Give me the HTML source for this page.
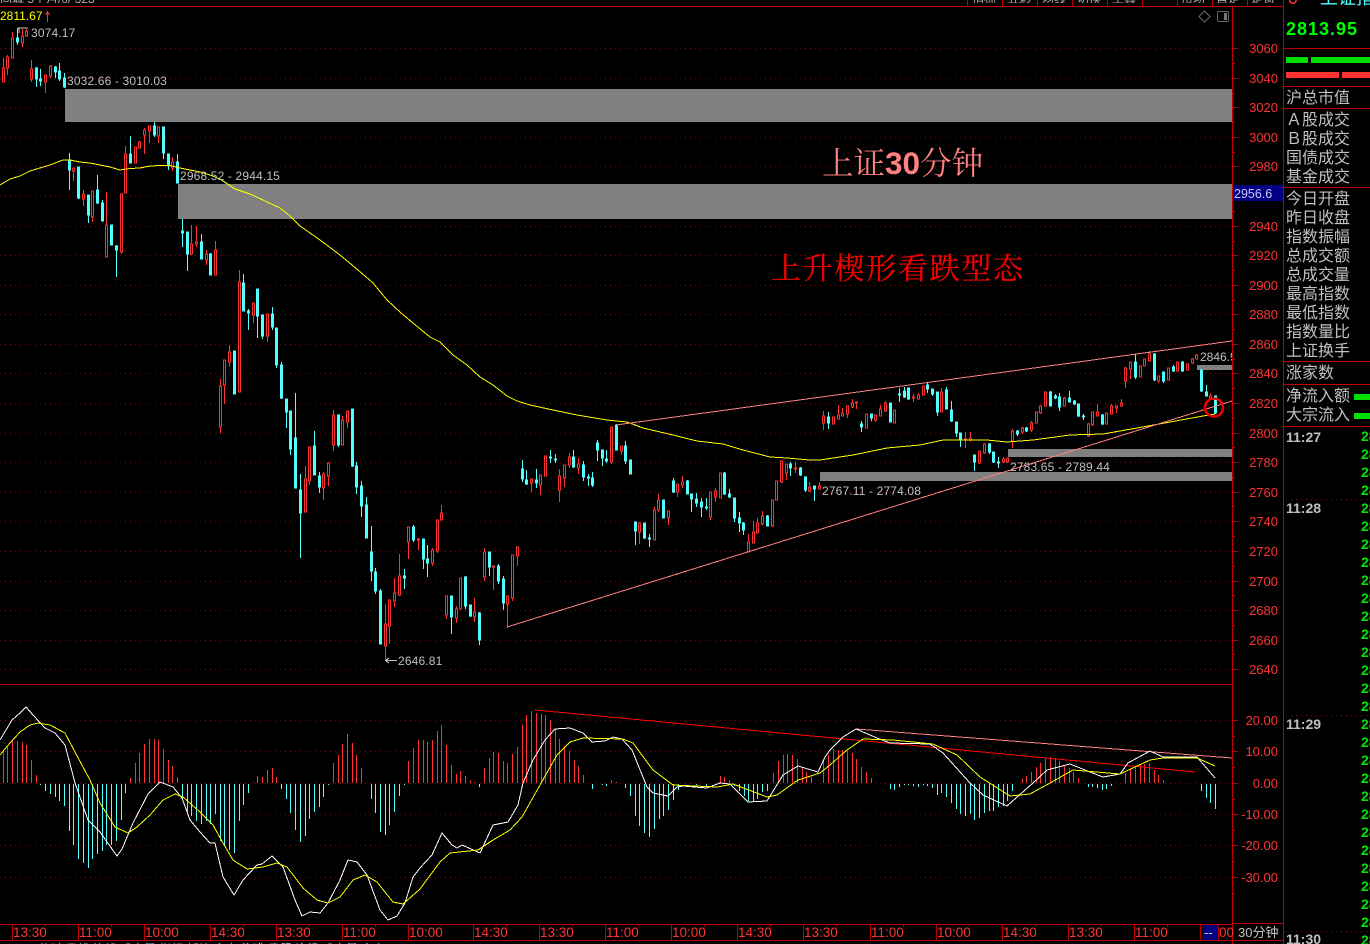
<!DOCTYPE html>
<html><head><meta charset="utf-8"><style>
html,body{margin:0;padding:0;background:#000;width:1370px;height:944px;overflow:hidden}
svg{display:block;font-family:"Liberation Sans",sans-serif}
.c{shape-rendering:crispEdges;fill:none}
.cj{font-family:"Liberation Sans","WenQuanYi Zen Hei","Noto Sans CJK SC",sans-serif}
</style></head><body>
<svg width="1370" height="944" viewBox="0 0 1370 944" xmlns="http://www.w3.org/2000/svg">
<rect width="1370" height="944" fill="#000"/>
<!-- grid -->
<path class="c" stroke="#900000" stroke-dasharray="1 4" d="M0 48.5H1232M0 78.5H1232M0 107.5H1232M0 137.5H1232M0 166.5H1232M0 196.5H1232M0 226.5H1232M0 255.5H1232M0 285.5H1232M0 314.5H1232M0 344.5H1232M0 373.5H1232M0 403.5H1232M0 433.5H1232M0 462.5H1232M0 492.5H1232M0 521.5H1232M0 551.5H1232M0 581.5H1232M0 610.5H1232M0 640.5H1232M0 669.5H1232M0 720.5H1232M0 751.5H1232M0 783.5H1232M0 814.5H1232M0 845.5H1232M0 877.5H1232"/>
<!-- zones -->
<g fill="#808080"><rect x="65" y="89" width="1167" height="33"/><rect x="178" y="184" width="1054" height="35"/><rect x="1008" y="449" width="224" height="8"/><rect x="820" y="472" width="412" height="9"/><rect x="1197" y="365" width="35" height="5"/></g>
<!-- red wicks -->
<path class="c" stroke="#ff3232" d="M3.5 58V82M7.5 55V75M12.5 32V58M22.5 29V47M26.5 29V37M31.5 60V82M45.5 75V93M50.5 65V78M73.5 168V181M83.5 190V206M92.5 191V222M106.5 192V257M121.5 194V254M125.5 146V193M135.5 147V163M139.5 141V148M144.5 128V154M149.5 126V143M158.5 127V143M172.5 157V171M191.5 225V255M196.5 226V247M206.5 250V265M215.5 241V275M220.5 379V433M224.5 360V404M229.5 345V367M239.5 270V392M253.5 303V323M267.5 314V342M305.5 466V512M309.5 447V485M323.5 472V500M328.5 462V486M333.5 410V451M342.5 416V445M347.5 411V428M385.5 604V660M389.5 600V644M394.5 578V607M399.5 554V596M408.5 527V559M418.5 538V550M432.5 548V566M437.5 520V553M441.5 505V520M446.5 596V619M456.5 606V623M460.5 578V609M474.5 598V622M484.5 548V581M493.5 566V590M507.5 596V628M512.5 555V601M517.5 547V566M531.5 479V492M540.5 475V495M545.5 456V476M559.5 469V502M564.5 465V487M569.5 453V468M578.5 458V474M611.5 427V464M621.5 446V455M639.5 522V544M654.5 507V540M658.5 494V512M668.5 511V525M677.5 484V497M682.5 476V488M710.5 492V520M715.5 488V502M720.5 473V498M748.5 534V552M753.5 521V543M757.5 518V533M762.5 511V525M772.5 500V527M776.5 481V500M781.5 461V483M786.5 464V480M795.5 462V473M809.5 482V492M819.5 482V489M823.5 411V430M833.5 417V424M838.5 405V419M842.5 408V416M847.5 406V418M852.5 399V408M856.5 402V409M866.5 414V428M875.5 415V422M880.5 405V416M885.5 401V412M894.5 410V423M913.5 394V402M918.5 393V399M923.5 386V395M941.5 388V412M965.5 432V448M970.5 432V442M979.5 451V464M984.5 443V454M1003.5 457V463M1007.5 458V463M1012.5 429V448M1022.5 427V434M1031.5 421V432M1036.5 412V423M1040.5 405V414M1045.5 392V406M1064.5 397V406M1088.5 423V437M1092.5 412V426M1097.5 404V416M1106.5 413V424M1111.5 404V414M1116.5 405V413M1121.5 399V407M1125.5 367V388M1130.5 362V379M1140.5 366V377M1144.5 359V366M1149.5 351V361M1158.5 376V383M1168.5 368V380M1177.5 362V371M1187.5 364V370M1192.5 358V364M1196.5 354V359M1210.5 393V398"/>
<!-- red bodies -->
<path class="c" stroke="#ff3232" style="fill:#000" d="M2.5 68h2V82h-2zM6.5 57h2V68h-2zM11.5 38h2V58h-2zM21.5 36h2V43h-2zM25.5 31h2V36h-2zM30.5 69h2V79h-2zM44.5 75h2V82h-2zM49.5 66h2V76h-2zM72.5 168h2V171h-2zM82.5 194h2V199h-2zM91.5 191h2V217h-2zM105.5 225h2V257h-2zM120.5 194h2V252h-2zM124.5 154h2V193h-2zM134.5 147h2V163h-2zM138.5 142h2V148h-2zM143.5 130h2V135h-2zM148.5 126h2V131h-2zM157.5 127h2V136h-2zM171.5 162h2V168h-2zM190.5 244h2V254h-2zM195.5 242h2V244h-2zM205.5 254h2V260h-2zM214.5 250h2V275h-2zM219.5 386h2V427h-2zM223.5 360h2V385h-2zM228.5 352h2V362h-2zM238.5 282h2V392h-2zM252.5 303h2V315h-2zM266.5 314h2V336h-2zM304.5 479h2V512h-2zM308.5 447h2V481h-2zM322.5 474h2V488h-2zM327.5 463h2V476h-2zM332.5 415h2V445h-2zM341.5 420h2V445h-2zM346.5 411h2V422h-2zM384.5 624h2V646h-2zM388.5 600h2V626h-2zM393.5 593h2V601h-2zM398.5 576h2V595h-2zM407.5 527h2V542h-2zM417.5 539h2V540h-2zM431.5 550h2V563h-2zM436.5 520h2V551h-2zM440.5 513h2V520h-2zM445.5 596h2V615h-2zM455.5 609h2V618h-2zM459.5 578h2V609h-2zM473.5 612h2V617h-2zM483.5 552h2V577h-2zM492.5 566h2V567h-2zM506.5 596h2V604h-2zM511.5 555h2V598h-2zM516.5 547h2V556h-2zM530.5 479h2V483h-2zM539.5 475h2V485h-2zM544.5 456h2V476h-2zM558.5 476h2V490h-2zM563.5 465h2V478h-2zM568.5 457h2V465h-2zM577.5 464h2V468h-2zM610.5 427h2V462h-2zM620.5 446h2V451h-2zM638.5 523h2V532h-2zM653.5 510h2V540h-2zM657.5 500h2V510h-2zM667.5 511h2V518h-2zM676.5 484h2V492h-2zM681.5 482h2V485h-2zM709.5 492h2V517h-2zM714.5 491h2V497h-2zM719.5 473h2V498h-2zM747.5 542h2V552h-2zM752.5 532h2V543h-2zM756.5 523h2V533h-2zM761.5 516h2V524h-2zM771.5 500h2V526h-2zM775.5 481h2V500h-2zM780.5 461h2V482h-2zM785.5 464h2V473h-2zM794.5 468h2V469h-2zM808.5 487h2V491h-2zM818.5 486h2V489h-2zM822.5 416h2V423h-2zM832.5 417h2V424h-2zM837.5 415h2V419h-2zM841.5 413h2V416h-2zM846.5 406h2V414h-2zM851.5 403h2V407h-2zM855.5 402h2V403h-2zM865.5 414h2V428h-2zM874.5 415h2V420h-2zM879.5 409h2V416h-2zM884.5 403h2V411h-2zM893.5 410h2V423h-2zM912.5 397h2V398h-2zM917.5 395h2V399h-2zM922.5 386h2V395h-2zM940.5 392h2V412h-2zM964.5 439h2V440h-2zM969.5 438h2V440h-2zM978.5 451h2V463h-2zM983.5 444h2V453h-2zM1002.5 459h2V462h-2zM1006.5 458h2V462h-2zM1011.5 431h2V441h-2zM1021.5 428h2V432h-2zM1030.5 423h2V430h-2zM1035.5 412h2V423h-2zM1039.5 406h2V413h-2zM1044.5 392h2V406h-2zM1063.5 398h2V406h-2zM1087.5 424h2V436h-2zM1091.5 412h2V425h-2zM1096.5 412h2V416h-2zM1105.5 413h2V424h-2zM1110.5 406h2V414h-2zM1115.5 406h2V408h-2zM1120.5 403h2V406h-2zM1124.5 368h2V381h-2zM1129.5 362h2V369h-2zM1139.5 366h2V377h-2zM1143.5 359h2V366h-2zM1148.5 354h2V361h-2zM1157.5 376h2V381h-2zM1167.5 368h2V380h-2zM1176.5 362h2V371h-2zM1186.5 364h2V370h-2zM1191.5 359h2V363h-2zM1195.5 355h2V359h-2zM1209.5 396h2V398h-2z"/>
<!-- cyan -->
<path class="c" stroke="#54ffff" style="fill:#54ffff" d="M17.5 28V45M16.5 38h2V42h-2zM36.5 67V87M35.5 68h2V79h-2zM40.5 69V86M39.5 79h2V81h-2zM55.5 66V78M54.5 67h2V72h-2zM59.5 63V81M58.5 71h2V79h-2zM64.5 73V88M63.5 78h2V87h-2zM69.5 153V190M68.5 160h2V170h-2zM78.5 167V199M77.5 167h2V198h-2zM88.5 195V223M87.5 195h2V215h-2zM97.5 175V204M96.5 190h2V203h-2zM102.5 200V221M101.5 203h2V221h-2zM111.5 225V245M110.5 225h2V245h-2zM116.5 245V277M115.5 246h2V250h-2zM130.5 136V163M129.5 154h2V163h-2zM154.5 122V137M153.5 126h2V135h-2zM163.5 127V159M162.5 127h2V153h-2zM168.5 154V170M167.5 154h2V166h-2zM177.5 154V183M176.5 162h2V183h-2zM182.5 219V247M181.5 231h2V233h-2zM187.5 232V271M186.5 232h2V254h-2zM201.5 234V259M200.5 242h2V259h-2zM210.5 253V275M209.5 254h2V275h-2zM234.5 351V394M233.5 351h2V394h-2zM243.5 274V311M242.5 283h2V311h-2zM248.5 309V330M247.5 311h2V313h-2zM257.5 289V338M256.5 289h2V316h-2zM262.5 315V339M261.5 315h2V336h-2zM272.5 307V330M271.5 314h2V327h-2zM276.5 328V368M275.5 328h2V365h-2zM281.5 362V399M280.5 365h2V398h-2zM286.5 399V428M285.5 399h2V412h-2zM290.5 411V455M289.5 411h2V449h-2zM295.5 393V488M294.5 438h2V488h-2zM300.5 474V558M299.5 490h2V513h-2zM314.5 431V475M313.5 446h2V475h-2zM319.5 472V493M318.5 476h2V487h-2zM338.5 415V447M337.5 415h2V445h-2zM352.5 409V467M351.5 409h2V466h-2zM356.5 462V494M355.5 466h2V487h-2zM361.5 481V517M360.5 486h2V506h-2zM366.5 497V538M365.5 505h2V538h-2zM371.5 526V581M370.5 552h2V571h-2zM375.5 568V594M374.5 572h2V591h-2zM380.5 589V644M379.5 591h2V644h-2zM404.5 569V589M403.5 576h2V578h-2zM413.5 525V542M412.5 527h2V540h-2zM423.5 539V569M422.5 539h2V559h-2zM427.5 545V577M426.5 559h2V563h-2zM451.5 596V634M450.5 596h2V617h-2zM465.5 576V609M464.5 577h2V606h-2zM470.5 605V617M469.5 605h2V616h-2zM479.5 612V645M478.5 613h2V640h-2zM489.5 552V576M488.5 552h2V567h-2zM498.5 564V584M497.5 566h2V581h-2zM503.5 576V610M502.5 579h2V603h-2zM522.5 460V482M521.5 469h2V479h-2zM526.5 470V485M525.5 480h2V484h-2zM536.5 469V488M535.5 480h2V483h-2zM550.5 450V463M549.5 457h2V458h-2zM555.5 454V463M554.5 459h2V460h-2zM573.5 450V468M572.5 457h2V467h-2zM583.5 461V481M582.5 465h2V477h-2zM588.5 474V486M587.5 477h2V478h-2zM592.5 472V487M591.5 478h2V485h-2zM597.5 440V461M596.5 443h2V450h-2zM602.5 450V466M601.5 450h2V458h-2zM606.5 450V463M605.5 459h2V461h-2zM616.5 424V450M615.5 425h2V450h-2zM625.5 441V464M624.5 446h2V461h-2zM630.5 460V474M629.5 460h2V474h-2zM635.5 522V545M634.5 522h2V531h-2zM644.5 523V539M643.5 523h2V538h-2zM649.5 534V547M648.5 538h2V539h-2zM663.5 500V518M662.5 500h2V518h-2zM673.5 478V493M672.5 481h2V492h-2zM687.5 480V494M686.5 481h2V494h-2zM691.5 494V512M690.5 494h2V499h-2zM696.5 493V507M695.5 499h2V503h-2zM701.5 498V517M700.5 502h2V507h-2zM706.5 498V510M705.5 507h2V508h-2zM724.5 472V495M723.5 473h2V494h-2zM729.5 489V498M728.5 494h2V497h-2zM734.5 498V522M733.5 498h2V518h-2zM739.5 512V532M738.5 518h2V523h-2zM743.5 522V535M742.5 523h2V530h-2zM767.5 515V526M766.5 516h2V526h-2zM790.5 462V476M789.5 464h2V468h-2zM800.5 467V476M799.5 468h2V475h-2zM805.5 477V492M804.5 477h2V490h-2zM814.5 486V501M813.5 486h2V489h-2zM828.5 412V429M827.5 417h2V423h-2zM861.5 421V432M860.5 424h2V427h-2zM871.5 414V421M870.5 414h2V418h-2zM890.5 403V422M889.5 403h2V422h-2zM899.5 388V402M898.5 394h2V395h-2zM904.5 387V398M903.5 391h2V397h-2zM908.5 388V400M907.5 388h2V399h-2zM927.5 383V393M926.5 385h2V389h-2zM932.5 389V396M931.5 389h2V394h-2zM937.5 392V416M936.5 392h2V412h-2zM946.5 387V409M945.5 390h2V409h-2zM951.5 401V422M950.5 410h2V421h-2zM956.5 422V437M955.5 422h2V433h-2zM960.5 433V447M959.5 433h2V440h-2zM974.5 455V471M973.5 455h2V462h-2zM989.5 443V454M988.5 444h2V452h-2zM993.5 452V463M992.5 452h2V462h-2zM998.5 457V468M997.5 462h2V463h-2zM1017.5 430V436M1016.5 431h2V434h-2zM1026.5 427V432M1025.5 428h2V431h-2zM1050.5 391V406M1049.5 392h2V406h-2zM1055.5 394V399M1054.5 396h2V398h-2zM1059.5 393V411M1058.5 397h2V407h-2zM1069.5 391V402M1068.5 398h2V402h-2zM1074.5 400V405M1073.5 401h2V404h-2zM1078.5 404V417M1077.5 404h2V416h-2zM1083.5 414V420M1082.5 416h2V417h-2zM1102.5 414V425M1101.5 415h2V424h-2zM1135.5 354V379M1134.5 362h2V377h-2zM1154.5 353V381M1153.5 354h2V380h-2zM1163.5 372V383M1162.5 372h2V381h-2zM1173.5 365V372M1172.5 367h2V371h-2zM1182.5 361V372M1181.5 362h2V371h-2zM1201.5 370V392M1200.5 370h2V391h-2zM1206.5 385V396M1205.5 392h2V396h-2zM1215.5 396V414M1214.5 396h2V413h-2z"/>
<!-- MA -->
<polyline class="c" stroke="#ffff00" points="0,185 10,179 20,176 30,171 40,168 50,165 63,160 70,160 80,162 90,163 100,165 110,167 120,170 130,168.5 140,168 150,166 160,165.5 170,165.5 180,168 190,170 200,172 210,175 220,179 235,189 250,194 265,201 280,208 290,216 300,226 320,240 340,255 358,270 373,283 387,300 400,312 413,323 430,337 440,342 453,355 467,365 480,377 493,385 507,396 517,401 530,405 553,410 577,415 607,420 627,422 643,428 660,432 677,436 697,441 723,444 743,450 770,457 787,458 810,460 820,460 853,455 887,448 920,445 943,440 987,440 1007,442 1033,440 1070,435 1103,434 1137,428 1170,422 1203,416 1215,414"/>
<!-- trend -->
<path class="c" stroke="#ff8080" d="M616 425L1232 341M507 627L1232 401"/>
<circle cx="1214" cy="407.500" r="9" fill="none" stroke="#f00000" stroke-width="2.600"/>
<!-- macd bars -->
<path class="c" stroke="#ff3232" d="M3.5 750V783M7.500 747V783M12.500 740V783M17.500 741V783M22.500 742V783M26.500 745V783M31.500 760V783M36.500 775V783M130.500 778V783M135.500 763V783M139.500 753V783M144.500 744V783M149.500 739V783M154.500 739V783M158.500 740V783M163.500 749V783M168.500 760V783M172.500 766V783M177.500 777V783M253.500 782V783M257.500 776V783M262.500 777V783M267.500 770V783M272.500 768V783M276.500 777V783M333.500 763V783M338.500 755V783M342.500 744V783M347.500 734V783M352.500 743V783M356.500 755V783M361.500 768V783M408.500 761V783M413.500 748V783M418.500 740V783M423.500 740V783M427.500 742V783M432.500 740V783M437.500 731V783M441.500 725V783M446.500 745V783M451.500 765V783M456.500 774V783M460.500 771V783M465.500 776V783M470.500 780V783M474.500 782V783M484.500 768V783M489.500 758V783M493.500 752V783M498.500 753V783M503.500 761V783M507.500 763V783M512.500 754V783M517.500 747V783M522.500 725V783M526.500 715V783M531.500 711V783M536.500 713V783M541.500 714V783M545.500 715V783M550.500 720V783M555.500 729V783M559.500 739V783M564.500 746V783M569.500 751V783M574.500 760V783M578.500 766V783M583.500 775V783M611.500 780V783M616.500 782V783M720.500 776V783M724.500 777V783M729.500 780V783M773.500 773V783M778.500 761V783M783.500 755V783M787.500 754V783M792.500 755V783M797.500 759V783M802.500 768V783M806.500 772V783M811.500 777V783M823.500 760V783M828.500 755V783M833.500 749V783M838.500 750V783M842.500 750V783M847.500 751V783M852.500 753V783M856.500 759V783M861.500 767V783M866.500 772V783M871.500 778V783M1022.500 779V783M1026.500 776V783M1031.500 772V783M1036.500 767V783M1040.500 763V783M1045.500 758V783M1050.500 757V783M1055.500 758V783M1059.500 761V783M1064.500 765V783M1069.500 768V783M1073.500 772V783M1078.500 778V783M1125.500 773V783M1130.500 769V783M1135.500 767V783M1140.500 765V783M1144.500 764V783M1149.500 763V783M1154.500 770V783M1158.500 775V783M1163.500 780V783"/>
<path class="c" stroke="#54ffff" d="M40.500 784V785M45.500 784V791M50.500 784V794M55.500 784V797M59.500 784V801M64.500 784V806M69.500 784V831M73.500 784V845M78.500 784V859M83.500 784V863M88.500 784V868M92.500 784V859M97.500 784V854M102.500 784V851M106.500 784V845M111.500 784V845M116.500 784V841M121.500 784V820M125.500 784V793M182.500 784V800M187.500 784V812M191.500 784V816M196.500 784V821M201.500 784V824M206.500 784V821M210.500 784V824M215.500 784V814M220.500 784V841M224.500 784V846M229.500 784V850M234.500 784V853M239.500 784V821M243.500 784V805M248.500 784V793M281.500 784V789M286.500 784V799M290.500 784V813M295.500 784V830M300.500 784V842M305.500 784V836M309.500 784V819M314.500 784V812M319.500 784V807M323.500 784V797M328.500 784V785M371.500 784V799M375.500 784V813M380.500 784V832M385.500 784V835M389.500 784V825M394.500 784V812M399.500 784V796M404.500 784V785M479.500 784V787M592.500 784V789M602.500 784V785M606.500 784V786M625.500 784V788M630.500 784V796M635.500 784V816M639.500 784V826M644.500 784V833M649.500 784V837M654.500 784V829M659.500 784V819M663.500 784V816M668.500 784V810M673.500 784V800M678.500 784V790M696.500 784V785M706.500 784V787M734.500 784V786M739.500 784V791M744.500 784V796M748.500 784V801M753.500 784V802M757.500 784V799M762.500 784V792M767.500 784V791M890.500 784V789M894.500 784V790M899.500 784V787M904.500 784V785M908.500 784V785M913.500 784V786M918.500 784V787M923.500 784V785M927.500 784V786M932.500 784V788M937.500 784V795M941.500 784V793M946.500 784V797M951.500 784V803M956.500 784V809M960.500 784V814M965.500 784V816M970.500 784V814M974.500 784V820M979.500 784V818M984.500 784V813M989.500 784V811M993.500 784V811M998.500 784V807M1003.500 784V806M1007.500 784V801M1012.500 784V791M1088.500 784V787M1092.500 784V787M1097.500 784V788M1102.500 784V790M1106.500 784V789M1111.500 784V786M1201.500 784V791M1206.500 784V798M1210.500 784V803M1215.500 784V809"/>
<!-- macd trend -->
<path class="c" stroke="#ff0000" d="M535 710L1195 772"/>
<path class="c" stroke="#ff8080" d="M856 729L1232 758"/>
<!-- DIF -->
<polyline class="c" stroke="#ffffff" points="0,740 6,730 12,720 20,713 26,707 33,715 45,728 55,733 65,745 75,783 88,820 100,832 117,856 122,849 133,823 148,794 160,782 173,787 182,798 190,820 200,832 210,843 215,843 223,877 234,895 243,880 257,865 262,864 272,856 283,867 295,900 302,916 310,912 320,913 328,903 340,880 348,860 357,862 367,875 380,910 388,920 397,916 405,903 413,877 420,868 432,855 442,833 452,845 457,848 462,845 480,853 493,825 508,822 518,805 523,783 533,760 545,740 555,729 570,728 583,733 592,742 605,741 613,737 622,739 632,750 647,787 653,793 668,796 677,787 683,786 707,788 720,783 730,784 748,802 767,801 783,775 798,766 818,772 825,757 830,750 843,737 856,729 877,738 890,743 930,744 943,753 970,783 983,795 1007,806 1033,783 1047,770 1070,764 1090,772 1103,777 1120,774 1128,763 1150,751 1163,757 1197,757 1215,778"/>
<!-- DEA -->
<polyline class="c" stroke="#ffff00" points="0,755 10,743 20,732 30,725 38,723 50,725 65,733 75,752 90,780 100,803 115,827 128,833 137,827 150,815 163,800 175,794 183,797 200,812 213,825 223,843 233,860 247,869 263,867 277,863 287,867 303,888 317,900 328,903 340,897 353,880 365,875 377,882 393,902 403,904 420,889 440,862 450,853 478,850 493,840 510,830 522,817 540,785 557,755 570,742 583,738 623,739 633,743 653,770 673,785 717,787 733,784 767,797 777,795 798,780 820,773 830,765 847,750 863,739 893,740 933,744 957,755 980,777 1010,796 1030,794 1050,783 1073,770 1120,774 1150,760 1163,758 1197,758 1215,766"/>
<!-- frame -->
<path class="c" stroke="#c00000" d="M0 6.500H1283M0 684.500H1232M0 924.500H1232M0 940.500H1283M1232.500 6V944M1283.500 0V944M1233 923.500H1283M1283 48.500H1370M1283 86.500H1370M1283 108.500H1370M1283 187.500H1370M1283 361.500H1370M1283 384.500H1370M1283 426.500H1370M967.500 0V6M1002.500 0V6M1037.500 0V6M1072.500 0V6M1107.500 0V6M1142.500 0V6M1177.500 0V6M1212.500 0V6M1247.500 0V6M12.500 924V940M78.500 924V940M144.500 924V940M210.500 924V940M276.500 924V940M342.500 924V940M408.500 924V940M473.500 924V940M539.500 924V940M605.500 924V940M671.500 924V940M737.500 924V940M803.500 924V940M870.500 924V940M936.500 924V940M1002.500 924V940M1068.500 924V940M1134.500 924V940M1200.500 924V940M1218.500 924V940M45.500 924V927M111.500 924V927M177.500 924V927M243.500 924V927M309.500 924V927M375.500 924V927M441.500 924V927M506.500 924V927M572.500 924V927M638.500 924V927M704.500 924V927M770.500 924V927M836.500 924V927M903.500 924V927M969.500 924V927M1035.500 924V927M1101.500 924V927M1167.500 924V927M1232 48.500H1238M1232 78.500H1238M1232 107.500H1238M1232 137.500H1238M1232 166.500H1238M1232 226.500H1238M1232 255.500H1238M1232 285.500H1238M1232 314.500H1238M1232 344.500H1238M1232 373.500H1238M1232 403.500H1238M1232 433.500H1238M1232 462.500H1238M1232 492.500H1238M1232 521.500H1238M1232 551.500H1238M1232 581.500H1238M1232 610.500H1238M1232 640.500H1238M1232 669.500H1238M1232 63.500H1235M1232 93.500H1235M1232 122.500H1235M1232 152.500H1235M1232 211.500H1235M1232 241.500H1235M1232 270.500H1235M1232 300.500H1235M1232 329.500H1235M1232 359.500H1235M1232 388.500H1235M1232 418.500H1235M1232 447.500H1235M1232 477.500H1235M1232 506.500H1235M1232 536.500H1235M1232 566.500H1235M1232 595.500H1235M1232 625.500H1235M1232 654.500H1235M1232 720.500H1238M1232 751.500H1238M1232 783.500H1238M1232 814.500H1238M1232 845.500H1238M1232 877.500H1238M1232 736.500H1235M1232 767.500H1235M1232 799.500H1235M1232 830.500H1235M1232 861.500H1235M1232 893.500H1235"/>
<path class="c" stroke="#a00000" stroke-dasharray="1 4" d="M1286 499.500H1370M1286 715.500H1370M1286 931.500H1370"/>
<!-- axis labels -->
<g font-size="13" fill="#ff3232" text-anchor="end">
<text x="1278" y="53">3060</text><text x="1278" y="83">3040</text><text x="1278" y="112">3020</text><text x="1278" y="142">3000</text><text x="1278" y="171">2980</text><text x="1278" y="231">2940</text><text x="1278" y="260">2920</text><text x="1278" y="290">2900</text><text x="1278" y="319">2880</text><text x="1278" y="349">2860</text><text x="1278" y="378">2840</text><text x="1278" y="408">2820</text><text x="1278" y="438">2800</text><text x="1278" y="467">2780</text><text x="1278" y="497">2760</text><text x="1278" y="526">2740</text><text x="1278" y="556">2720</text><text x="1278" y="586">2700</text><text x="1278" y="615">2680</text><text x="1278" y="645">2660</text><text x="1278" y="674">2640</text>
<text x="1278" y="725">20.00</text><text x="1278" y="756">10.00</text><text x="1278" y="788">0.00</text><text x="1278" y="819">-10.00</text><text x="1278" y="850">-20.00</text><text x="1278" y="882">-30.00</text>
</g>
<rect x="1233" y="185" width="50" height="16" fill="#000080"/>
<text x="1234" y="198" font-size="12.500" fill="#c8c8ff">2956.6</text>
<!-- time labels -->
<g font-size="13.500" fill="#ff3232">
<text x="13" y="937">13:30</text><text x="79" y="937">11:00</text><text x="145" y="937">10:00</text><text x="211" y="937">14:30</text><text x="277" y="937">13:30</text><text x="343" y="937">11:00</text><text x="409" y="937">10:00</text><text x="474" y="937">14:30</text><text x="540" y="937">13:30</text><text x="606" y="937">11:00</text><text x="672" y="937">10:00</text><text x="738" y="937">14:30</text><text x="804" y="937">13:30</text><text x="871" y="937">11:00</text><text x="937" y="937">10:00</text><text x="1003" y="937">14:30</text><text x="1069" y="937">13:30</text><text x="1135" y="937">11:00</text><text x="1219" y="937">00</text>
</g>
<rect x="1203" y="925" width="15" height="15" fill="#000080"/>
<text x="1204" y="937" font-size="13" fill="#d0d0d0">--</text>
<text x="1238" y="937" font-size="13" fill="#c0c0c0" class="cj">30分钟</text>
<!-- price notes -->
<g font-size="12" fill="#c0c0c0" letter-spacing=".15">
<text x="31" y="37">3074.17</text>
<text x="67" y="85">3032.66 - 3010.03</text>
<text x="180" y="180">2968.52 - 2944.15</text>
<text x="822" y="495">2767.11 - 2774.08</text>
<text x="1010" y="471">2783.65 - 2789.44</text>
<text x="398" y="665">2646.81</text>
</g>
<svg x="1200" y="345" width="32" height="20"><text x="0" y="16" font-size="12" fill="#c0c0c0">2846.9</text></svg>
<path class="c" stroke="#c0c0c0" d="M18 28H28M19 27V33M385 660.500H397M386 660L389 658M386 661L389 663"/>
<text x="0" y="20" font-size="12" fill="#ffff00">2811.67</text>
<path class="c" stroke="#ff3232" d="M47.500 11V22M45 14H50M46 13H49"/>
<!-- icons -->
<path class="c" stroke="#666" d="M1204.500 11L1210 16.500L1204.500 22L1199 16.500Z"/>
<rect x="1217.500" y="11.500" width="11" height="10" rx="1.500" fill="none" stroke="#666"/><rect x="1224" y="13" width="3" height="7" fill="#777"/>
<!-- annotations -->
<text x="822" y="174" font-size="31.500" fill="#ff8080" font-family="'Liberation Sans','Noto Serif CJK SC',serif">上证<tspan font-weight="bold">30</tspan>分钟</text>
<text x="771" y="279" font-size="30" letter-spacing="1.700" fill="#f00000" stroke="#f00000" stroke-width=".3" font-family="'Liberation Serif','Noto Serif CJK SC',serif">上升楔形看跌型态</text>
<!-- right panel -->
<text x="1286" y="35" font-size="18" font-weight="bold" letter-spacing="1" fill="#00ff00">2813.95</text>
<svg x="1284" y="0" width="86" height="6"><text x="4" y="4" font-size="18" fill="#ff3232">0</text><text x="20" y="4" font-size="18" fill="#00ff00">-</text><text x="36" y="4" font-size="18" fill="#54ffff" class="cj">上证指</text></svg>
<g fill="#00e000"><rect x="1286" y="57" width="22" height="6"/><rect x="1311" y="57" width="59" height="6"/><rect x="1354" y="394" width="16" height="6"/><rect x="1354" y="413" width="16" height="6"/></g>
<g fill="#ff3232"><rect x="1286" y="72" width="53" height="6"/><rect x="1342" y="72" width="28" height="6"/></g>
<g font-size="16" fill="#c0c0c0" class="cj">
<text x="1286" y="103">沪总市值</text><text x="1286" y="125">Ａ股成交</text><text x="1286" y="144">Ｂ股成交</text><text x="1286" y="163">国债成交</text><text x="1286" y="182">基金成交</text><text x="1286" y="204">今日开盘</text><text x="1286" y="223">昨日收盘</text><text x="1286" y="242">指数振幅</text><text x="1286" y="261">总成交额</text><text x="1286" y="280">总成交量</text><text x="1286" y="299">最高指数</text><text x="1286" y="318">最低指数</text><text x="1286" y="337">指数量比</text><text x="1286" y="356">上证换手</text><text x="1286" y="378">涨家数</text><text x="1286" y="401">净流入额</text><text x="1286" y="420">大宗流入</text>
</g>
<g font-size="14" font-weight="bold" fill="#c0c0c0"><text x="1286" y="442">11:27</text><text x="1286" y="513">11:28</text><text x="1286" y="729">11:29</text><text x="1286" y="944">11:30</text></g>
<g font-size="14" font-weight="bold" fill="#00e800">
<text x="1361" y="441">28</text><text x="1361" y="459">28</text><text x="1361" y="477">28</text><text x="1361" y="495">28</text><text x="1361" y="513">28</text><text x="1361" y="531">28</text><text x="1361" y="549">28</text><text x="1361" y="567">28</text><text x="1361" y="585">28</text><text x="1361" y="603">28</text><text x="1361" y="621">28</text><text x="1361" y="639">28</text><text x="1361" y="657">28</text><text x="1361" y="675">28</text><text x="1361" y="693">28</text><text x="1361" y="711">28</text><text x="1361" y="729">28</text><text x="1361" y="747">28</text><text x="1361" y="765">28</text><text x="1361" y="783">28</text><text x="1361" y="801">28</text><text x="1361" y="819">28</text><text x="1361" y="837">28</text><text x="1361" y="855">28</text><text x="1361" y="873">28</text><text x="1361" y="891">28</text><text x="1361" y="909">28</text><text x="1361" y="927">28</text><text x="1361" y="945">28</text>
</g>
<!-- clipped top text -->
<svg x="0" y="0" width="1283" height="3"><g font-size="12" fill="#b0b0b0" class="cj"><text x="0" y="3">固城 5个月/0/ 323</text><text x="972" y="3">指标</text><text x="1007" y="3">五彩</text><text x="1042" y="3">均线</text><text x="1077" y="3">切换</text><text x="1112" y="3">工具</text><text x="1181" y="3">市场</text><text x="1216" y="3">自定</text><text x="1251" y="3">定窗</text></g></svg>
<svg x="0" y="941" width="1283" height="3"><g font-size="12" fill="#b0b0b0" class="cj"><text x="38" y="12">分时 日线 均线 成交量 指标 板块 主力 资金 个股 大盘</text><text x="240" y="12">分时 日线 均线 成交量 主力</text></g></svg>
</svg>
</body></html>
